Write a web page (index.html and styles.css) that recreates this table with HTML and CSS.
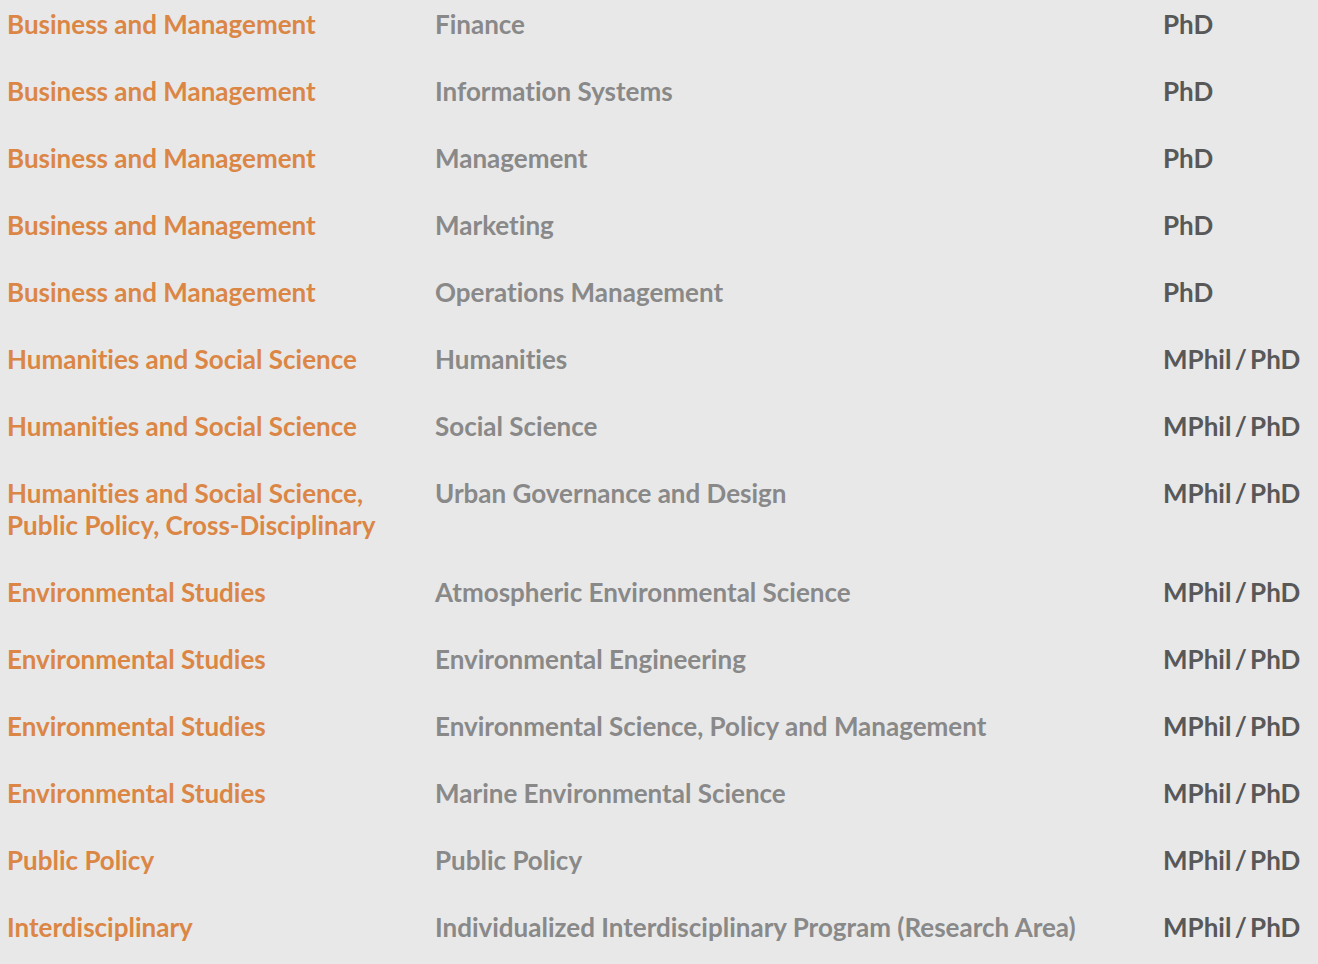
FILE: index.html
```html
<!DOCTYPE html>
<html lang="en">
<head>
<meta charset="utf-8">
<title>Programs</title>
<link rel="stylesheet" href="styles.css">
</head>
<body>
<div class="programs">
  <div class="row"><div class="school">Business and Management</div><div class="program">Finance</div><div class="degree">PhD</div></div>
  <div class="row"><div class="school">Business and Management</div><div class="program">Information Systems</div><div class="degree">PhD</div></div>
  <div class="row"><div class="school">Business and Management</div><div class="program">Management</div><div class="degree">PhD</div></div>
  <div class="row"><div class="school">Business and Management</div><div class="program">Marketing</div><div class="degree">PhD</div></div>
  <div class="row"><div class="school">Business and Management</div><div class="program">Operations Management</div><div class="degree">PhD</div></div>
  <div class="row"><div class="school">Humanities and Social Science</div><div class="program">Humanities</div><div class="degree">MPhil / PhD</div></div>
  <div class="row"><div class="school">Humanities and Social Science</div><div class="program">Social Science</div><div class="degree">MPhil / PhD</div></div>
  <div class="row"><div class="school">Humanities and Social Science,<br>Public Policy, Cross-Disciplinary</div><div class="program">Urban Governance and Design</div><div class="degree">MPhil / PhD</div></div>
  <div class="row"><div class="school">Environmental Studies</div><div class="program">Atmospheric Environmental Science</div><div class="degree">MPhil / PhD</div></div>
  <div class="row"><div class="school">Environmental Studies</div><div class="program">Environmental Engineering</div><div class="degree">MPhil / PhD</div></div>
  <div class="row"><div class="school">Environmental Studies</div><div class="program">Environmental Science, Policy and Management</div><div class="degree">MPhil / PhD</div></div>
  <div class="row"><div class="school">Environmental Studies</div><div class="program">Marine Environmental Science</div><div class="degree">MPhil / PhD</div></div>
  <div class="row"><div class="school">Public Policy</div><div class="program">Public Policy</div><div class="degree">MPhil / PhD</div></div>
  <div class="row"><div class="school">Interdisciplinary</div><div class="program">Individualized Interdisciplinary Program (Research Area)</div><div class="degree">MPhil / PhD</div></div>
</div>
</body>
</html>
```
FILE: styles.css
```css
html, body {
  margin: 0;
  padding: 0;
  background: #e8e8e8;
}
body {
  font-family: Lato, "Open Sans", sans-serif;
  font-weight: 700;
  font-size: 26px;
  line-height: 32px;
  font-variant-ligatures: none;
}
.programs {
  padding: 8px 0 0 7px;
  display: flex;
  flex-direction: column;
  gap: 35px;
}
.row {
  display: grid;
  grid-template-columns: 428px 728px 1fr;
}
.school {
  color: #db8645;
}
.program {
  color: #898989;
}
.degree {
  color: #585858;
  word-spacing: -3px;
}
```
